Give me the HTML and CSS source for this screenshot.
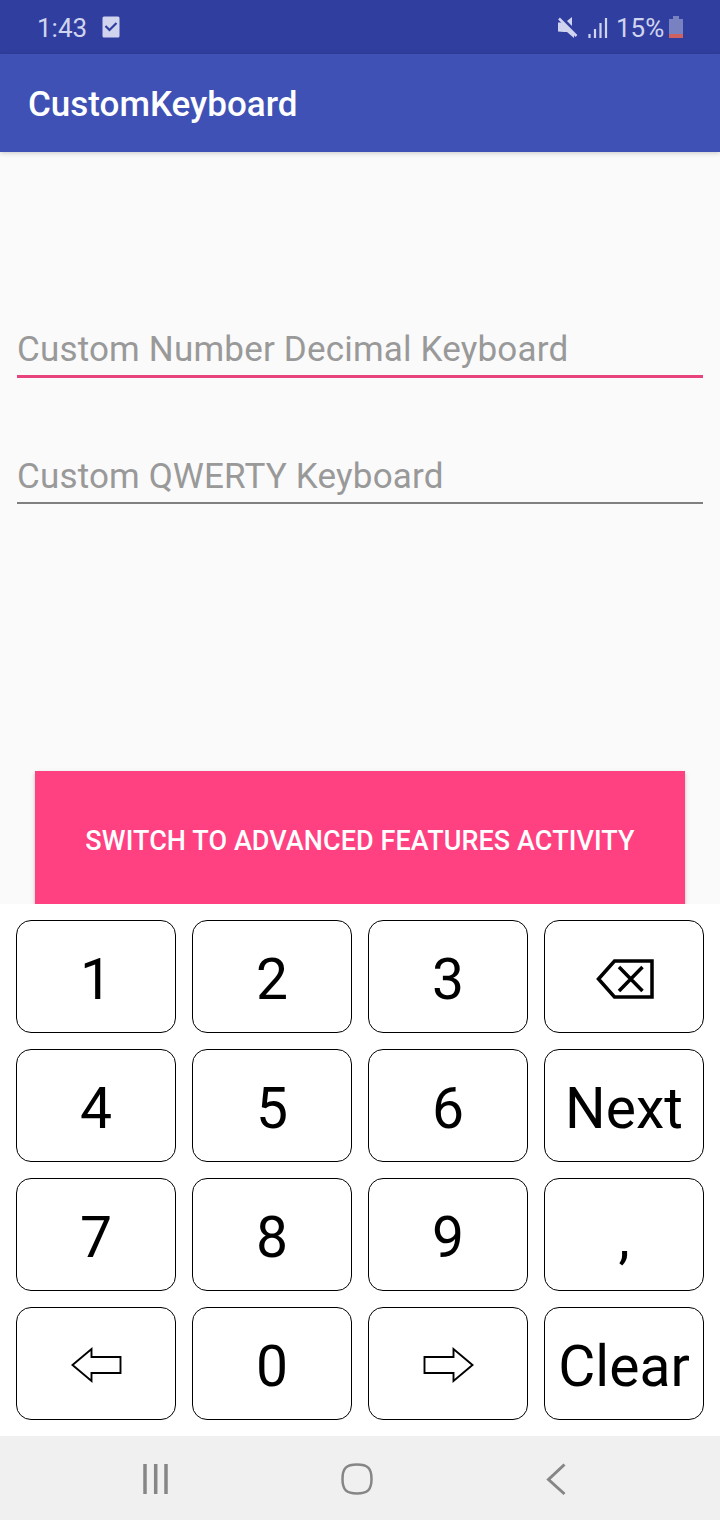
FILE: index.html
```html
<!DOCTYPE html>
<html lang="en">
<head>
<meta charset="utf-8">
<title>CustomKeyboard</title>
<link rel="stylesheet" href="styles.css">
</head>
<body>
<div class="screen">
  <div class="status">
    <span class="time">1:43</span>
    <svg class="task" width="18" height="22" viewBox="0 0 18 22"><rect x="0.5" y="0.5" width="17" height="21" rx="1.5" fill="#d0d4ee"/><path d="M3.500 10l4 4L14.500 7" fill="none" stroke="#303f9f" stroke-width="2.200"/></svg>
    <svg class="mute" width="22" height="24" viewBox="0 0 22 24"><path d="M1 7.500h4L17 18v5L10 17H7l-6-.5zM10 6L15 2v9z" fill="#d0d4ee"/><path d="M2 3.500L19.500 21" stroke="#d0d4ee" stroke-width="2.500"/></svg>
    <svg class="signal" width="20" height="22" viewBox="0 0 20 22"><path d="M1.500 17v4M7 12v9M12.500 6v15M18 1v20" stroke="#d0d4ee" stroke-width="2.200"/></svg>
    <span class="percent">15%</span>
    <svg class="battery" width="14" height="22" viewBox="0 0 14 22"><path d="M0 3h4V0h6v3h4v15H0z" fill="#7982c0"/><path d="M0 18h14v4H0z" fill="#cf6160"/></svg>
  </div>
  <header class="appbar">CustomKeyboard</header>
  <main class="content">
    <div class="field focused"><span class="hint">Custom Number Decimal Keyboard</span></div>
    <div class="field"><span class="hint">Custom QWERTY Keyboard</span></div>
    <div class="switch"><span>SWITCH TO ADVANCED FEATURES ACTIVITY</span></div>
  </main>
  <div class="keyboard">
    <div class="key">1</div><div class="key">2</div><div class="key">3</div>
    <div class="key icon"><svg width="160" height="113" viewBox="544 920 160 113"><path d="M598.500 979L614.500 961H652V997H614.500Z" stroke-width="3.500"/><path d="M619 967L642.500 991M642.500 967L619 991" stroke-width="3.500"/></svg></div>
    <div class="key">4</div><div class="key">5</div><div class="key">6</div><div class="key">Next</div>
    <div class="key">7</div><div class="key">8</div><div class="key">9</div><div class="key">,</div>
    <div class="key icon"><svg width="160" height="113" viewBox="16 1307 160 113"><path d="M72.500 1365L91.500 1349V1357H120.500V1373H91.500V1381Z" stroke-width="1.900"/></svg></div>
    <div class="key">0</div>
    <div class="key icon"><svg width="160" height="113" viewBox="368 1307 160 113"><path d="M472.500 1365L453.500 1349V1357H424.500V1373H453.500V1381Z" stroke-width="1.900"/></svg></div>
    <div class="key">Clear</div>
  </div>
  <nav class="navbar">
    <svg width="26" height="32" viewBox="0 0 26 32"><path d="M2 1v30M12.700 1v30M23 1v30" stroke-width="3.500"/></svg>
    <svg width="34" height="34" viewBox="1 0 34 34"><path d="M17 2.500C27.500 2.500 31.500 6 31.500 17S27.500 31.500 17 31.500 2.500 28 2.500 17 6.500 2.500 17 2.500Z" stroke-width="2.500"/></svg>
    <svg width="20" height="34" viewBox="0 0 20 34"><path d="M18.500 2.500L2.500 17.500 18.500 32" stroke-width="3"/></svg>
  </nav>
</div>
</body>
</html>
```
FILE: styles.css
```css
* { box-sizing: border-box; }
body { margin: 0; font-family: Roboto, sans-serif; }
svg { display: block; flex: none; }
.screen { width: 720px; height: 1520px; display: flex; flex-direction: column; background: #fafafa; overflow: hidden; }
.status { height: 54px; flex: none; display: flex; align-items: center; padding: 0 37px 0 37px; background: #303f9f; color: #d0d4ee; font-size: 26px; }
.time, .percent { line-height: 30px; padding-top: 2px; white-space: nowrap; }
.time { width: 65px; }
.mute { margin-left: auto; }
.signal { margin: 2px 8px 0 9px; }
.percent { width: 49px; }
.battery { margin-left: 4px; }
.appbar { height: 98px; flex: none; padding: 2px 0 0 28px; line-height: 98px; background: #3f51b5; color: #fff; font-size: 35px; font-weight: 500; box-shadow: 0 1px 5px rgba(0,0,0,.2); }
.content { height: 752px; flex: none; padding-top: 172px; overflow: hidden; }
.field { height: 54px; margin: 0 17px 72px; padding-top: 2px; border-bottom: 2px solid #808080; color: #999; font-size: 35px; line-height: 48px; white-space: nowrap; }
.focused { border-bottom: 3px solid #e8437c; }
.field + .field { padding-top: 3px; }
.hint { letter-spacing: .18px; }
.switch { height: 140px; margin: 267px 35px 0; background: #ff4081; color: #fff; font-size: 27px; font-weight: 500; line-height: 141px; text-align: center; box-shadow: 0 2px 4px rgba(0,0,0,.25); white-space: nowrap; letter-spacing: .08px; }
.keyboard { position: relative; height: 532px; flex: none; display: grid; grid-template-columns: repeat(4, 160px); grid-auto-rows: 113px; gap: 16px; padding: 16px; background: #fff; }
.key { display: flex; align-items: center; justify-content: center; padding-top: 7px; border: 1px solid #000; border-radius: 15px; color: #000; font-size: 57px; line-height: 68px; white-space: nowrap; }
.key.icon { padding: 0; }
.icon svg { fill: none; stroke: #000; }
.navbar { height: 84px; flex: none; display: flex; align-items: center; justify-content: space-between; padding: 2px 154px 0 143px; background: #f0f0f0; }
.navbar svg { fill: none; stroke: #868686; }
```
